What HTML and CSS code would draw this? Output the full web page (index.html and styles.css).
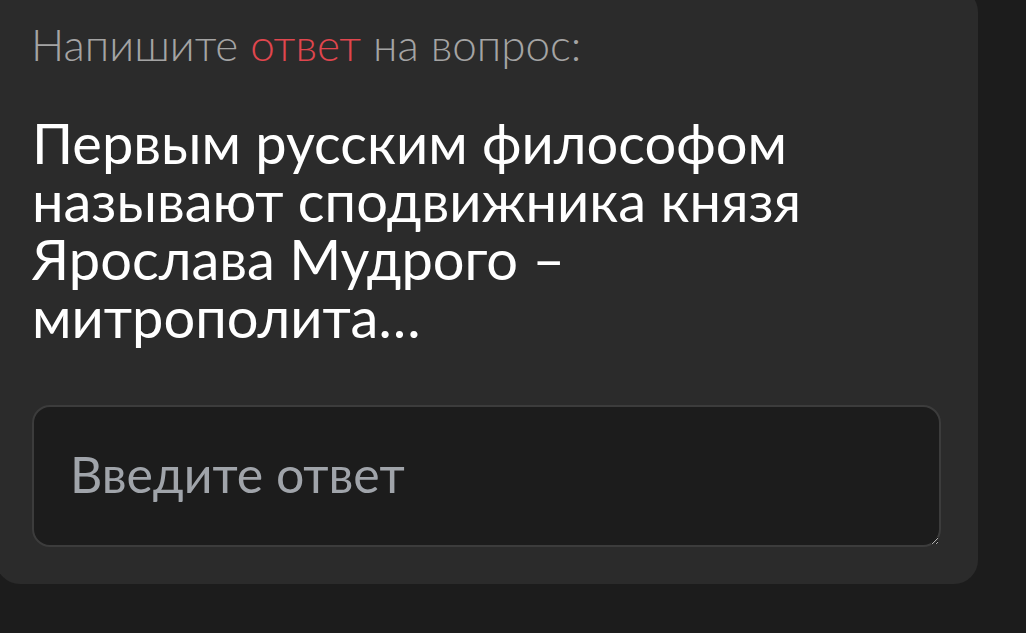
FILE: index.html
```html
<!DOCTYPE html>
<html lang="ru">
<head>
<meta charset="utf-8">
<link rel="stylesheet" href="styles.css">
</head>
<body>
<div class="card">
  <p class="prompt">Напишите <span class="accent">ответ</span> на вопрос:</p>
  <p class="question">Первым русским философом называют сподвижника князя Ярослава Мудрого – митрополита…</p>
  <textarea class="answer" placeholder="Введите ответ"></textarea>
</div>
</body>
</html>
```

FILE: styles.css
```css
html, body {
  margin: 0;
  padding: 0;
  background: #1c1c1c;
  height: 100%;
  overflow: hidden;
}
.card {
  box-sizing: border-box;
  width: 982px;
  margin: -12px 0 0 -4px;
  padding: 30px 38px 37px 35px;
  background: #2b2b2b;
  border-radius: 24px;
}
.prompt {
  margin: 0;
  font-family: Lato, "Noto Sans", sans-serif;
  font-weight: 300;
  font-size: 44px;
  line-height: 52px;
  color: #a4a4a4;
}
.accent {
  color: #e0464e;
}
.question {
  margin: 44px 0 0 1px;
  font-family: Lato, "Noto Sans", sans-serif;
  font-weight: 400;
  font-size: 56px;
  line-height: 58px;
  color: #ffffff;
  width: 800px;
}
.answer {
  display: block;
  box-sizing: border-box;
  width: 909px;
  height: 142px;
  margin: 59px 0 0 1px;
  padding: 37px 36px;
  background: #1c1c1c;
  border: 2px solid #3c3c3c;
  border-radius: 18px;
  font-family: Lato, "Noto Sans", sans-serif;
  font-size: 50px;
  line-height: 60px;
  color: #ddd;
  outline: none;
}
.answer::placeholder {
  color: #a0a4aa;
}
```
